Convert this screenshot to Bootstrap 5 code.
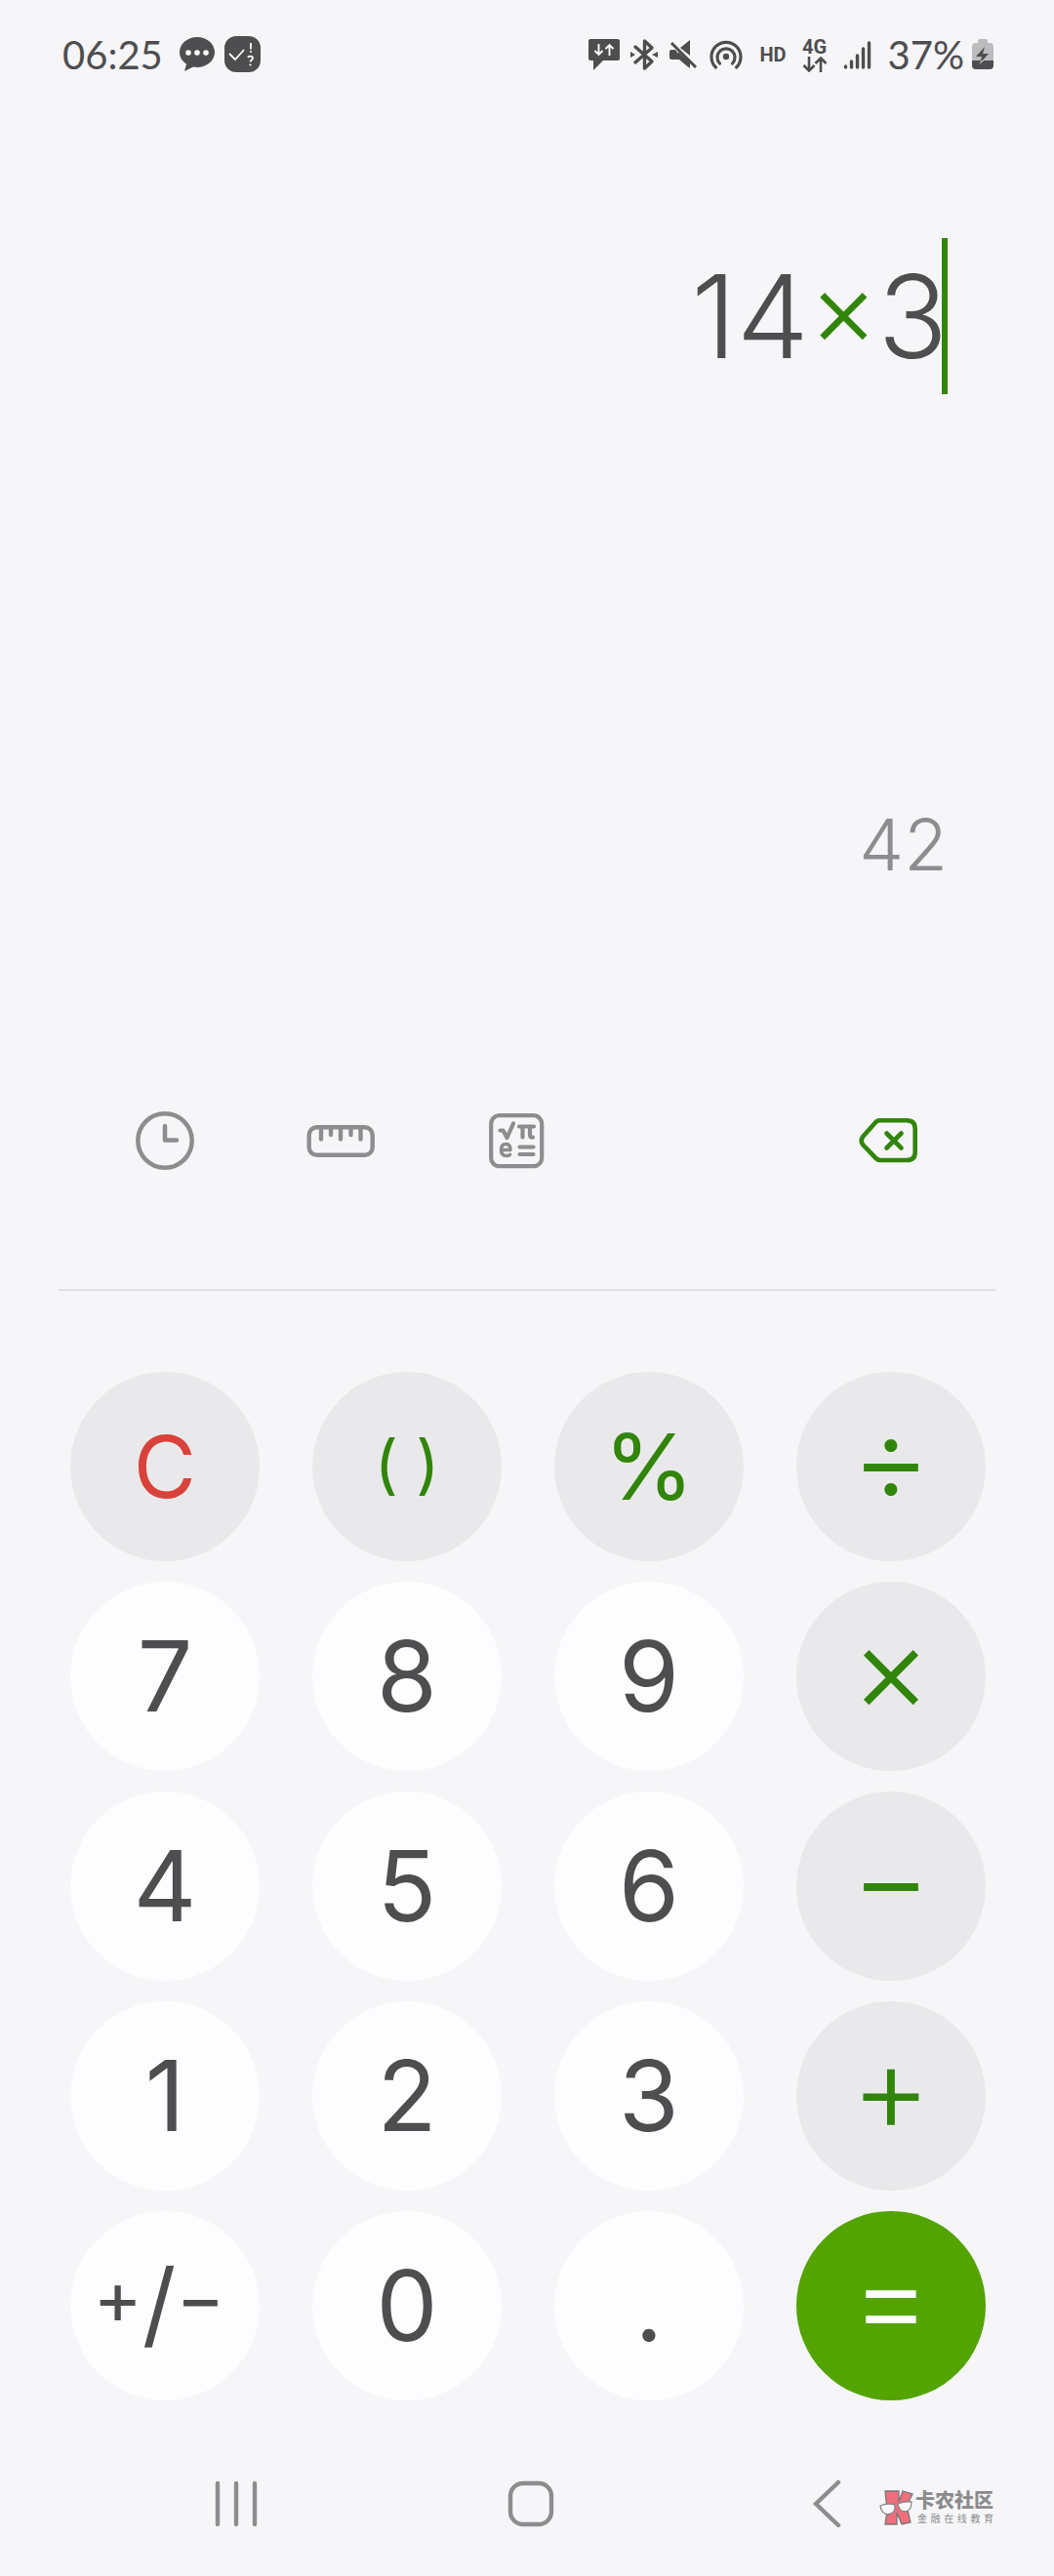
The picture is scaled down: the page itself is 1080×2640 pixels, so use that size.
<!DOCTYPE html>
<html lang="zh-CN">
<head>
<meta charset="utf-8">
<meta name="viewport" content="width=device-width, initial-scale=1">
<title>Calculator</title>
<link href="https://cdn.jsdelivr.net/npm/bootstrap@5.3.0/dist/css/bootstrap.min.css" rel="stylesheet">
<style>
:root{--ink:#4e4e50;--green:#31850b;--muted-ink:#8d8d8f}
body{background:#f6f6f8;color:var(--ink);font-family:Inter,"Noto Sans CJK SC",sans-serif}
svg{display:block;flex:none}
.status{height:112px;padding:0 62px 0 64px}
.status-text{font-family:Lato,sans-serif;font-size:40px;line-height:48px}
.net-label{font-family:Roboto,sans-serif;font-weight:700;font-size:20px;line-height:20px}
.screen{padding:132px 109px 0 72px}
.expression{font-size:118px;line-height:160px;height:160px;font-weight:350}
.operator{color:var(--green);font-size:108px;line-height:1;vertical-align:12px}
.caret{right:0;top:0;width:6px;height:160px;background:var(--green)}
.result{margin-top:422px;font-size:73px;line-height:80px;font-weight:350;color:var(--muted-ink)}
.tools{margin-top:223px;padding:0 80px 0 79px}
.tool{width:180px;height:80px;color:var(--muted-ink)}
.tool-erase{color:var(--green)}
.rule{height:2px;margin:112px 60px 0;background:#e1e1e3}
.keypad{grid-template-columns:repeat(4,1fr);gap:21px 54px;padding:83px 70px 0 72px}
.key{--bs-btn-bg:#fdfdff;--bs-btn-color:var(--ink);--bs-btn-hover-bg:#f0f0f2;--bs-btn-hover-color:var(--ink);--bs-btn-font-size:100px;--bs-btn-line-height:1;aspect-ratio:1;padding:0}
.key-fn{--bs-btn-bg:#e9e9eb;--bs-btn-color:var(--green);--bs-btn-hover-bg:#dfdfe1;--bs-btn-hover-color:var(--green)}
.key-clear{--bs-btn-font-size:88px;--bs-btn-color:#d9423a;--bs-btn-hover-color:#d9423a}
.key-percent{--bs-btn-font-size:94px}
.key-paren{--bs-btn-font-size:66px;padding-bottom:6px}
.key-equal{--bs-btn-bg:#53a301;--bs-btn-color:#fff;--bs-btn-hover-bg:#489000;--bs-btn-hover-color:#fff}
.key-op{--bs-btn-font-size:126px;--bs-btn-font-weight:350;padding-bottom:18px}
.key-sign{--bs-btn-font-size:76px;padding:0 12px 6px 0}
.sign-part{padding-bottom:12px}
.sign-slash{font-size:96px}
.navbar-keys{margin-top:66px;padding:0 82px 34px 91px;color:var(--muted-ink)}
.nav-key{height:80px}
.brand{right:62px;bottom:52px;color:#8b8b8d}
.brand-name{font-size:20px;line-height:22px;font-weight:900}
.brand-sub{font-size:10px;line-height:14px;text-align-last:justify;padding-left:2px}
</style>
</head>
<body>
<header class="status d-flex align-items-center justify-content-between">
  <div class="d-flex align-items-center">
    <span class="status-text me-3">06:25</span>
    <svg class="me-2" width="38" height="38" viewBox="0 0 38 38" aria-label="Messages"><path d="M19 1C9 1 1 8 1 16.500c0 5.500 3 9.500 7 12L6 36l9-4.500c1.300.2 2.600.5 4 .5 10 0 18-7 18-15.500S29 1 19 1Z" fill="currentColor"/><g fill="#fff"><circle cx="10" cy="17" r="2.800"/><circle cx="19" cy="17" r="2.800"/><circle cx="28" cy="17" r="2.800"/></g></svg>
    <svg width="38" height="38" viewBox="0 0 38 38" aria-label="App alert"><rect x="1" width="37" height="37" rx="12" fill="currentColor"/><path d="m6 18 6 6 9-10M28 7v6.500M25 22c.500-2 5-2 5 .5 0 2-2.500 2-2.500 4" fill="none" stroke="#fff" stroke-width="1.800"/><circle cx="28" cy="16" r="1.100" fill="#fff"/><circle cx="27.500" cy="29.500" r="1.100" fill="#fff"/></svg>
  </div>
  <div class="d-flex align-items-center">
    <svg width="34" height="34" viewBox="0 0 34 34" aria-label="Data alert"><path d="M3 1h28q2 0 2 2v18q0 2-2 2H16L6 33V23H3q-2 0-2-2V3q0-2 2-2Z" fill="currentColor"/><path d="M11.500 6v11m-4-4 4 4 4-4M22.500 18V7m-4 4 4-4 4 4" fill="none" stroke="#fff" stroke-width="1.900"/></svg>
    <svg class="ms-2" width="32" height="34" viewBox="0 0 32 34" aria-label="Bluetooth"><path d="m7 9 17 15-7.500 7V3l7.500 7L7 25" fill="none" stroke="currentColor" stroke-width="3.400" stroke-linejoin="round" stroke-linecap="round"/><path d="m2 14 5 3-5 3Zm28 0-6 3 6 3Z" fill="currentColor"/></svg>
    <svg class="ms-2" width="34" height="34" viewBox="0 0 34 34" aria-label="Muted"><path d="M4 12h4l14 18.500-9.500-8.500H4q-2 0-2-2v-6q0-2 2-2Zm9-2L23 2v16Z" fill="currentColor"/><path d="m11 14 12 11v6L11 21Z" fill="currentColor"/><path d="m4 5 25 25" stroke="currentColor" stroke-width="3"/></svg>
    <svg class="ms-2" width="36" height="34" viewBox="0 0 36 34" aria-label="Hotspot"><g fill="none" stroke="currentColor" stroke-width="3.200" stroke-linecap="round"><path d="M7.500 30a15 15 0 1 1 21 0"/><path d="M11.500 26a9 9 0 1 1 13 0"/></g><circle cx="18" cy="19" r="3.200" fill="currentColor"/></svg>
    <span class="net-label ms-3">HD</span>
    <div class="ms-3 d-flex flex-column align-items-center"><span class="net-label">4G</span>
      <svg width="26" height="16" viewBox="0 0 26 16" aria-label="Data activity"><path d="M7 0v14M1.500 9 7 14.500 12.500 9M19 16V2M13.500 7 19 1.500 24.500 7" fill="none" stroke="currentColor" stroke-width="2.600"/></svg></div>
    <svg class="ms-3" width="30" height="32" viewBox="0 0 30 32" aria-label="Signal"><path d="M2.500 29v-1M8.500 29v-6M14.500 29V17M20.500 29V10M26.500 29V4" fill="none" stroke="currentColor" stroke-width="3.400" stroke-linecap="round"/></svg>
    <span class="status-text ms-3">37%</span>
    <svg class="ms-2" width="22" height="34" viewBox="0 0 22 34" aria-label="Battery"><path d="M6 5V3q0-2 2-2h6q2 0 2 2v2h2q4 0 4 4v19q0 4-4 4H4q-4 0-4-4V9q0-4 4-4Z" fill="#bcbcbe"/><path d="M0 23h22v5q0 4-4 4H4q-4 0-4-4Z" fill="currentColor"/><path d="m13 9-9 10h6l-2 7 9-10h-6Z" fill="currentColor"/><path d="m7 27 3-4 2 0Z" fill="#fff"/></svg>
  </div>
</header>

<main>
  <section class="screen text-end">
    <div class="expression position-relative">14<span class="operator">×</span>3<span class="caret position-absolute"></span></div>
    <div class="result">42</div>
  </section>

  <div class="tools d-flex align-items-center">
    <button class="tool btn border-0 p-0 d-flex align-items-center justify-content-center" aria-label="History">
      <svg width="60" height="60" viewBox="0 0 60 60" fill="none" stroke="currentColor" stroke-width="4.500" stroke-linecap="round" stroke-linejoin="round"><circle cx="30" cy="30" r="27.700"/><path d="M30 15v14.500h12"/></svg></button>
    <button class="tool btn border-0 p-0 d-flex align-items-center justify-content-center" aria-label="Unit converter">
      <svg width="70" height="60" viewBox="0 0 70 60" fill="none" stroke="currentColor" stroke-width="4.400" stroke-linecap="round"><rect x="2.700" y="16.200" width="65" height="28.600" rx="8"/><path d="M15 18v10.500M25 18v6M35 18v10.500M45.500 18v6M55.500 18v10.500"/></svg></button>
    <button class="tool btn border-0 p-0 d-flex align-items-center justify-content-center" aria-label="Scientific mode">
      <svg width="60" height="60" viewBox="0 0 60 60" fill="none" stroke="currentColor" stroke-width="4.200" stroke-linecap="round" stroke-linejoin="round"><rect x="4.200" y="4.200" width="52" height="52" rx="8.500"/><path d="M13.500 19.500h3l4 7.500 6.500-14.500M33 15.500h15M36.500 16v10.500M44 16v8q0 3 3 2.500M33.500 36.500h14M33.500 44h14"/><path d="M14.500 39.500h9.500q0-6-4.500-6-5 0-5 6t5.500 6q2 0 3.500-1" stroke-width="3.600"/></svg></button>
    <button class="tool tool-erase btn border-0 p-0 ms-auto d-flex align-items-center justify-content-center" aria-label="Backspace">
      <svg width="60" height="60" viewBox="0 0 60 60" fill="none" stroke="currentColor" stroke-width="4.600" stroke-linecap="round" stroke-linejoin="round"><path d="M21 9.300h28q8.700 0 8.700 8.700v24q0 8-8.700 8H22q-2.500 0-4.500-2L4.500 34.500Q.8 30 4.500 25.500L16.500 12q2-2.700 4.500-2.700Z"/><path d="m28.500 22.500 15 15m0-15-15 15"/></svg></button>
  </div>

  <div class="rule"></div>

  <div class="keypad d-grid">
    <button class="key key-fn key-clear btn rounded-circle border-0">C</button>
    <button class="key key-fn key-paren btn rounded-circle border-0">( )</button>
    <button class="key key-fn key-percent btn rounded-circle border-0">%</button>
    <button class="key key-fn key-op btn rounded-circle border-0">÷</button>
    <button class="key btn rounded-circle border-0">7</button>
    <button class="key btn rounded-circle border-0">8</button>
    <button class="key btn rounded-circle border-0">9</button>
    <button class="key key-fn key-op btn rounded-circle border-0">×</button>
    <button class="key btn rounded-circle border-0">4</button>
    <button class="key btn rounded-circle border-0">5</button>
    <button class="key btn rounded-circle border-0">6</button>
    <button class="key key-fn key-op btn rounded-circle border-0">−</button>
    <button class="key btn rounded-circle border-0">1</button>
    <button class="key btn rounded-circle border-0">2</button>
    <button class="key btn rounded-circle border-0">3</button>
    <button class="key key-fn key-op btn rounded-circle border-0">+</button>
    <button class="key key-sign btn rounded-circle border-0 d-flex align-items-center justify-content-center"><span class="sign-part">+</span><span class="sign-slash">/</span><span class="sign-part">−</span></button>
    <button class="key btn rounded-circle border-0">0</button>
    <button class="key btn rounded-circle border-0">.</button>
    <button class="key key-equal key-op btn rounded-circle border-0">=</button>
  </div>
</main>

<footer class="position-relative">
  <nav class="navbar-keys d-flex" aria-label="System">
    <button class="nav-key btn border-0 p-0 flex-fill d-flex align-items-center justify-content-center text-reset" aria-label="Recents"><svg width="50" height="50" viewBox="0 0 50 50" fill="none" stroke="currentColor" stroke-width="4.400" stroke-linecap="round"><path d="M6 4v42M25 4v42M44 4v42"/></svg></button>
    <button class="nav-key btn border-0 p-0 flex-fill d-flex align-items-center justify-content-center text-reset" aria-label="Home"><svg width="50" height="50" viewBox="0 0 50 50" fill="none" stroke="currentColor" stroke-width="4.400"><rect x="4" y="4" width="42" height="42" rx="13"/></svg></button>
    <button class="nav-key btn border-0 p-0 flex-fill d-flex align-items-center justify-content-center text-reset" aria-label="Back"><svg width="50" height="50" viewBox="0 0 50 50" fill="none" stroke="currentColor" stroke-width="4.400" stroke-linecap="round"><path d="M37 3 14 25l23 22"/></svg></button>
  </nav>
  <div class="brand position-absolute d-flex align-items-center">
    <svg width="38" height="36" viewBox="0 0 36 36" aria-label="Logo"><path d="M6 1h14v11l4-11 10 3-6 12 4 17-9 2-5-12v12H6l2-14Z" fill="#ee6f7c" stroke="#77777a" stroke-width="1.300"/><path d="M1 16q7-3 15-1 1 9-7 10-7-1-8-9Zm18-2q7-3 14-2 0 9-6 10-7 0-8-8Z" fill="#fafafc" stroke="#858587" stroke-width="1.300"/></svg>
    <div class="d-flex flex-column"><span class="brand-name">卡农社区</span><span class="brand-sub">金融在线教育</span></div>
  </div>
</footer>
<script src="https://cdn.jsdelivr.net/npm/bootstrap@5.3.0/dist/js/bootstrap.bundle.min.js"></script>
</body>
</html>
